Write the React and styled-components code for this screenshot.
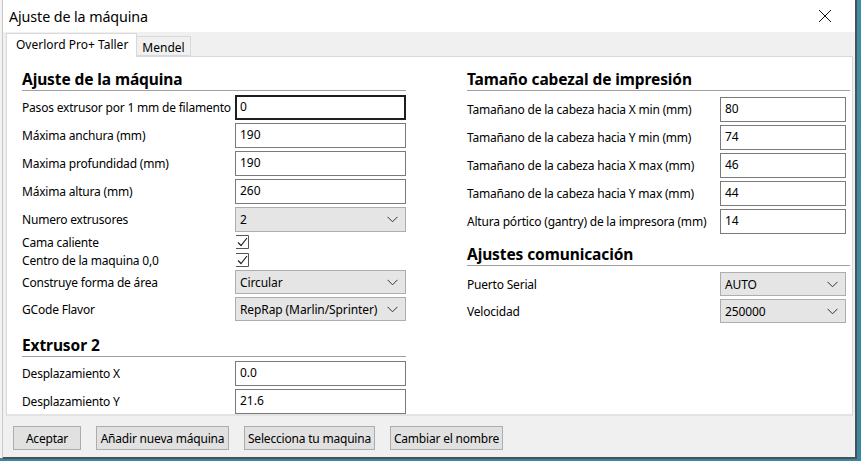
import React from "react";
import styled, { createGlobalStyle } from "styled-components";

const GlobalStyle = createGlobalStyle`
  html, body {
    margin: 0;
    padding: 0;
    width: 861px;
    height: 461px;
    overflow: hidden;
    background: #3f8ea8;
  }
  * { box-sizing: border-box; }
`;

const leftRows = [
  { label: "Pasos extrusor por 1 mm de filamento", value: "0", focused: true },
  { label: "Máxima anchura (mm)", value: "190" },
  { label: "Maxima profundidad (mm)", value: "190" },
  { label: "Máxima altura (mm)", value: "260" },
];

const headRows = [
  { label: "Tamañano de la cabeza hacia X min (mm)", value: "80" },
  { label: "Tamañano de la cabeza hacia Y min (mm)", value: "74" },
  { label: "Tamañano de la cabeza hacia X max (mm)", value: "46" },
  { label: "Tamañano de la cabeza hacia Y max (mm)", value: "44" },
  { label: "Altura pórtico (gantry) de la impresora (mm)", value: "14" },
];

function Chevron() {
  return (
    <svg width="11" height="7" viewBox="0 0 11 7">
      <path d="M0.5 0.8 L5.5 5.8 L10.5 0.8" fill="none" stroke="#333" strokeWidth="1" />
    </svg>
  );
}

function Select({ value }) {
  return (
    <SelectBox>
      <span>{value}</span>
      <Chevron />
    </SelectBox>
  );
}

function Check() {
  return (
    <CheckBox>
      <svg width="15" height="15" viewBox="0 0 15 15">
        <path d="M1 0.5 H13.5 V13.5 H1" fill="none" stroke="#555" strokeWidth="1" />
        <path d="M3 7.5 L6 10.5 L12 3" fill="none" stroke="#222" strokeWidth="1.2" />
      </svg>
    </CheckBox>
  );
}

export default function App() {
  return (
    <>
      <GlobalStyle />
      <Desktop>
        <BehindStrip />
        <Window>
          <TitleBar>
            <Title>Ajuste de la máquina</Title>
            <CloseButton>
              <svg width="14" height="14" viewBox="0 0 14 14">
                <path d="M1 1 L13 13 M13 1 L1 13" stroke="#111" strokeWidth="1" />
              </svg>
            </CloseButton>
          </TitleBar>
          <Body>
            <Tabs>
              <Tab $active>Overlord Pro+ Taller</Tab>
              <Tab>Mendel</Tab>
            </Tabs>
            <Panel>
              <LeftColumn>
                <Heading>Ajuste de la máquina</Heading>
                <Rows>
                  {leftRows.map((r) => (
                    <Row key={r.label} $labelWidth={213}>
                      <Label>{r.label}</Label>
                      <TextInput $focused={r.focused}>{r.value}</TextInput>
                    </Row>
                  ))}
                  <Row $labelWidth={213}>
                    <Label>Numero extrusores</Label>
                    <Select value="2" />
                  </Row>
                </Rows>
                <Checks>
                  <CheckRow>
                    <Label>Cama caliente</Label>
                    <Check />
                  </CheckRow>
                  <CheckRow>
                    <Label>Centro de la maquina 0,0</Label>
                    <Check />
                  </CheckRow>
                </Checks>
                <Rows>
                  <Row $labelWidth={213} $height={24}>
                    <Label>Construye forma de área</Label>
                    <Select value="Circular" />
                  </Row>
                  <Row $labelWidth={213} $height={24}>
                    <Label>GCode Flavor</Label>
                    <Select value="RepRap (Marlin/Sprinter)" />
                  </Row>
                </Rows>
                <Heading $spaced $gap={14}>Extrusor 2</Heading>
                <Rows>
                  <Row $labelWidth={213}>
                    <Label>Desplazamiento X</Label>
                    <TextInput>0.0</TextInput>
                  </Row>
                  <Row $labelWidth={213}>
                    <Label>Desplazamiento Y</Label>
                    <TextInput>21.6</TextInput>
                  </Row>
                </Rows>
              </LeftColumn>
              <RightColumn>
                <Heading>Tamaño cabezal de impresión</Heading>
                <Rows $inset>
                  {headRows.map((r) => (
                    <Row key={r.label} $labelWidth={253} $height={25}>
                      <Label>{r.label}</Label>
                      <TextInput>{r.value}</TextInput>
                    </Row>
                  ))}
                </Rows>
                <Heading $spaced $gap={10}>Ajustes comunicación</Heading>
                <Rows $inset>
                  <Row $labelWidth={253} $height={24}>
                    <Label>Puerto Serial</Label>
                    <Select value="AUTO" />
                  </Row>
                  <Row $labelWidth={253} $height={24}>
                    <Label>Velocidad</Label>
                    <Select value="250000" />
                  </Row>
                </Rows>
              </RightColumn>
            </Panel>
            <ButtonBar>
              <Button $width={68}>Aceptar</Button>
              <Button $width={133}>Añadir nueva máquina</Button>
              <Button $width={131}>Selecciona tu maquina</Button>
              <Button $width={113}>Cambiar el nombre</Button>
            </ButtonBar>
          </Body>
        </Window>
      </Desktop>
    </>
  );
}

const Desktop = styled.div`
  display: flex;
  width: 861px;
  height: 461px;
  background: linear-gradient(180deg, #3f8ea8 0%, #3a87a2 100%);
  font-family: "Noto Sans", "Open Sans", sans-serif;
  color: #000;
`;

const BehindStrip = styled.div`
  width: 3px;
  height: 458px;
  background: #f3f3f3;
  border-right: 1px solid #c8c8c8;
`;

const Window = styled.div`
  width: 854px;
  height: 459px;
  display: flex;
  flex-direction: column;
  background: #f0f0f0;
  border-right: 2px solid #4a5258;
  border-bottom: 2px solid #4a5258;
`;

const TitleBar = styled.div`
  height: 32px;
  flex: none;
  display: flex;
  align-items: center;
  justify-content: space-between;
  background: #fff;
  padding-left: 6px;
`;

const Title = styled.div`
  font-size: 14.3px;
  letter-spacing: -0.1px;
`;

const CloseButton = styled.div`
  width: 46px;
  height: 32px;
  display: flex;
  align-items: center;
  justify-content: center;
  margin-right: 7px;
`;

const Body = styled.div`
  flex: 1;
  display: flex;
  flex-direction: column;
  padding: 1px 0 0 3px;
`;

const Tabs = styled.div`
  display: flex;
  align-items: flex-end;
  height: 23px;
  position: relative;
  z-index: 1;
`;

const Tab = styled.div`
  height: ${(p) => (p.$active ? "24px" : "20px")};
  margin-bottom: ${(p) => (p.$active ? "-1px" : "0")};
  padding: ${(p) => (p.$active ? "2px 8px 0 9px" : "2px 5px 0 5px")};
  background: ${(p) => (p.$active ? "#fff" : "#f0f0f0")};
  border: 1px solid #d9d9d9;
  border-bottom: ${(p) => (p.$active ? "none" : "1px solid #d9d9d9")};
  border-left: ${(p) => (p.$active ? "1px solid #d9d9d9" : "none")};
  font-size: 12px;
  line-height: 18px;
  white-space: nowrap;
`;

const Panel = styled.div`
  width: 847px;
  height: 360px;
  background: #fff;
  border: 1px solid #d9d9d9;
  border-bottom: 2px solid #e3e3e3;
  display: flex;
  padding: 12px 0 0 15px;
`;

const LeftColumn = styled.div`
  width: 384px;
  display: flex;
  flex-direction: column;
`;

const RightColumn = styled.div`
  width: 383px;
  margin-left: 61px;
  display: flex;
  flex-direction: column;
`;

const Heading = styled.div`
  font-size: 15.5px;
  font-weight: bold;
  line-height: 20px;
  padding-bottom: 1px;
  border-bottom: 1px solid #a0a0a0;
  margin-top: ${(p) => (p.$spaced ? `${p.$gap}px` : "0")};
  margin-bottom: 4px;
  letter-spacing: -0.1px;
`;

const Rows = styled.div`
  display: flex;
  flex-direction: column;
  gap: 3px;
  width: ${(p) => (p.$inset ? "379px" : "auto")};
  margin-top: ${(p) => (p.$inset ? "2px" : "0")};
`;

const Row = styled.div`
  display: grid;
  grid-template-columns: ${(p) => p.$labelWidth}px 1fr;
  align-items: center;
  height: ${(p) => p.$height || 25}px;
`;

const Label = styled.div`
  font-size: 12px;
  white-space: nowrap;
  letter-spacing: -0.2px;
`;

const TextInput = styled.div`
  height: 100%;
  border: 1px solid ${(p) => (p.$focused ? "#1e1e1e" : "#7a7a7a")};
  box-shadow: ${(p) => (p.$focused ? "inset 0 0 0 1px #1e1e1e" : "none")};
  background: #fff;
  font-size: 12px;
  padding: 2px 4px;
  line-height: 18px;
`;

const SelectBox = styled.div`
  height: 100%;
  display: flex;
  align-items: center;
  justify-content: space-between;
  border: 1px solid #adadad;
  background: #e5e5e5;
  font-size: 12px;
  padding: 0 7px 0 4px;
  letter-spacing: -0.1px;
`;

const Checks = styled.div`
  display: flex;
  flex-direction: column;
  gap: 3px;
  margin: 2px 0 3px;
`;

const CheckRow = styled.div`
  display: grid;
  grid-template-columns: 213px 15px;
  align-items: center;
  height: 15px;
`;

const CheckBox = styled.div`
  width: 15px;
  height: 15px;
  display: flex;
`;

const ButtonBar = styled.div`
  display: flex;
  gap: 15px;
  padding: 10px 0 0 7px;
`;

const Button = styled.div`
  width: ${(p) => p.$width}px;
  height: 24px;
  display: flex;
  align-items: center;
  justify-content: center;
  background: #e1e1e1;
  border: 1px solid #adadad;
  font-size: 12px;
  white-space: nowrap;
  letter-spacing: -0.2px;
`;
